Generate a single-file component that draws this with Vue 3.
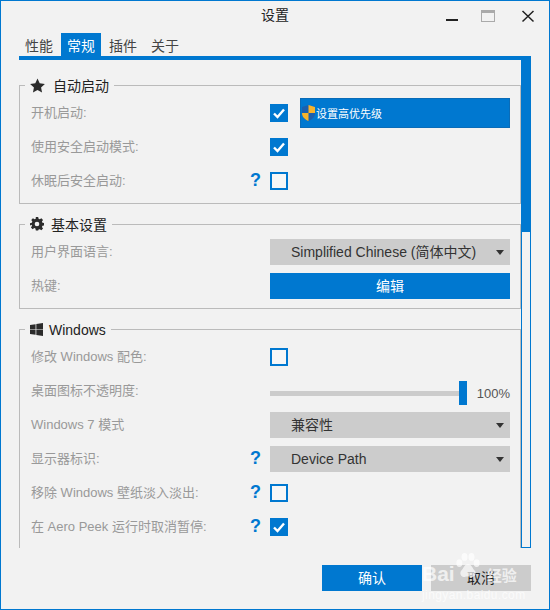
<script setup>
const autoRows = [
  { label: '开机启动:', checked: true, priority: true },
  { label: '使用安全启动模式:', checked: true },
  { label: '休眠后安全启动:', help: true, checked: false },
]
const winRows = [
  { label: '修改 Windows 配色:', type: 'check', checked: false },
  { label: '桌面图标不透明度:', type: 'slider' },
  { label: 'Windows 7 模式', type: 'combo', value: '兼容性' },
  { label: '显示器标识:', type: 'combo', help: true, value: 'Device Path' },
  { label: '移除 Windows 壁纸淡入淡出:', type: 'check', help: true, checked: false },
  { label: '在 Aero Peek 运行时取消暂停:', type: 'check', help: true, checked: true },
]
const tabs = ['性能', '常规', '插件', '关于']
</script>

<template>
  <div class="win">
    <div class="titlebar">
      <span class="title">设置</span>
      <div class="winbtns">
        <svg width="16" height="16" viewBox="0 0 16 16"><rect x="2" y="11" width="12" height="2" fill="#222" /></svg>
        <svg width="16" height="16" viewBox="0 0 16 16"><rect x="1.5" y="2.500" width="13" height="11" fill="none" stroke="#aaa" /><rect x="1" y="2" width="14" height="3" fill="#aaa" /></svg>
        <svg class="close" width="16" height="16" viewBox="0 0 16 16"><path d="M2.500 3 13.500 13.500M13.500 3 2.500 13.500" stroke="#222" stroke-width="1.500" fill="none" /></svg>
      </div>
    </div>

    <div class="tabs">
      <div v-for="t in tabs" :key="t" class="tab" :class="{ active: t === '常规' }">{{ t }}</div>
    </div>

    <div class="panel">
      <div class="scroll">
        <fieldset class="group">
          <legend>
            <svg width="15" height="15" viewBox="0 0 24 24"><path d="M12 .8l3.500 7.600 8.300 1-6.100 5.700 1.600 8.200L12 19.200l-7.300 4.100 1.600-8.200L.2 9.400l8.300-1z" fill="#2b2b2b" /></svg>
            <span>自动启动</span>
          </legend>
          <div v-for="r in autoRows" :key="r.label" class="row">
            <span class="label">{{ r.label }}</span>
            <span class="help">{{ r.help ? '?' : '' }}</span>
            <div class="ctl">
              <span class="check" :class="{ on: r.checked }">
                <svg v-if="r.checked" width="14" height="14" viewBox="0 0 14 14"><path d="M2 7.500 5.500 11 12 3.500" fill="none" stroke="#fff" stroke-width="2.400" /></svg>
              </span>
              <div v-if="r.priority" class="priority">
                <svg width="13" height="16" viewBox="0 0 13 16">
                  <path d="M6.500 0 13 2v6c0 4-3 6.500-6.500 8C3 14.500 0 12 0 8V2z" fill="#1b5fae" />
                  <path d="M6.500 0 13 2v6H6.500zM6.500 8v8C3 14.500 0 12 0 8z" fill="#f7b32b" />
                </svg>
                <span>设置高优先级</span>
              </div>
            </div>
          </div>
        </fieldset>

        <fieldset class="group">
          <legend class="tight">
            <svg width="14" height="14" viewBox="0 0 24 24"><path fill="#2b2b2b" fill-rule="evenodd" d="M10 1h4l.7 3.200 2 .8 2.800-1.800 2.800 2.800L20.500 8.800l.8 2 3.200.7v4l-3.200.5-.8 2 1.800 2.800-2.800 2.800-2.800-1.800-2 .8L14 24h-4l-.7-3.200-2-.8-2.800 1.800-2.800-2.800 1.800-2.800-.8-2L0 15.500v-4l3.200-.7.8-2L2.200 6 5 3.200 7.800 5l2-.8zM12 9a4 4 0 1 0 0 8 4 4 0 0 0 0-8z" transform="translate(0 -1)" /></svg>
            <span>基本设置</span>
          </legend>
          <div class="row">
            <span class="label">用户界面语言:</span>
            <span class="help"></span>
            <div class="ctl"><div class="combo">Simplified Chinese (简体中文)</div></div>
          </div>
          <div class="row">
            <span class="label">热键:</span>
            <span class="help"></span>
            <div class="ctl"><div class="btn wide">编辑</div></div>
          </div>
        </fieldset>

        <fieldset class="group">
          <legend class="win-legend">
            <svg width="13" height="13" viewBox="0 0 14 14"><path fill="#2b2b2b" d="M0 2.200 6 1.300V6.600H0zM6.800 1.200 14 0V6.600H6.800zM0 7.400H6V12.700L0 11.800zM6.800 7.400H14V14L6.800 12.800z" /></svg>
            <span>Windows</span>
          </legend>
          <div v-for="r in winRows" :key="r.label" class="row">
            <span class="label">{{ r.label }}</span>
            <span class="help">{{ r.help ? '?' : '' }}</span>
            <div class="ctl">
              <span v-if="r.type === 'check'" class="check" :class="{ on: r.checked }">
                <svg v-if="r.checked" width="14" height="14" viewBox="0 0 14 14"><path d="M2 7.500 5.500 11 12 3.500" fill="none" stroke="#fff" stroke-width="2.400" /></svg>
              </span>
              <div v-else-if="r.type === 'combo'" class="combo">{{ r.value }}</div>
              <div v-else class="slider">
                <div class="track"></div>
                <div class="thumb"></div>
                <span class="pct">100%</span>
              </div>
            </div>
          </div>
        </fieldset>
      </div>
      <div class="scrollbar"><div class="sthumb"></div></div>
    </div>

    <div class="actions">
      <div class="btn action">确认</div>
      <div class="btn action cancel">取消</div>
    </div>

    <div class="watermark">
      <div class="wm-top">
        <span class="wm-bai">Bai</span>
        <svg width="26" height="29" viewBox="0 0 30 32" fill="#fff">
          <ellipse cx="5" cy="12" rx="3.500" ry="4.500" />
          <ellipse cx="11" cy="5" rx="3.500" ry="4.500" />
          <ellipse cx="19" cy="5" rx="3.500" ry="4.500" />
          <ellipse cx="25" cy="12" rx="3.500" ry="4.500" />
          <path d="M15 13c4 0 5 5 8 8 2 3 0 8-4 7-2-.5-6-.5-8 0-4 1-6-4-4-7 3-3 4-8 8-8z" />
        </svg>
        <span class="wm-cn">经验</span>
      </div>
      <div class="wm-url">jingyan.baidu.com</div>
    </div>
  </div>
</template>

<style>
html, body { margin: 0; padding: 0; }
</style>

<style scoped>
.win {
  position: relative;
  box-sizing: border-box;
  width: 550px; height: 610px;
  background: #f2f2f2;
  border: 1px solid #0078d0;
  font-family: "Liberation Sans", "Noto Sans CJK SC", sans-serif;
  font-size: 14px;
  color: #333;
  overflow: hidden;
}

.titlebar { height: 32px; display: flex; align-items: center; justify-content: center; position: relative; }
.title { font-size: 14px; color: #222; margin-top: -6px; }
.winbtns { position: absolute; top: 7px; right: 13px; display: flex; gap: 20px; }
.close { margin-left: 4px; }

.tabs { display: flex; gap: 2px; height: 23px; padding-left: 18px; }
.tab { width: 40px; box-sizing: border-box; padding: 0 6px; line-height: 26px; color: #444; }
.tab.active { background: #0078d0; color: #fff; }

.panel {
  display: flex;
  margin-left: 18px;
  width: 512px; height: 492px;
  box-sizing: border-box;
  border-top: 4px solid #0078d0;
}
.scroll { width: 502px; height: 488px; overflow: hidden; padding-top: 15px; box-sizing: border-box; flex: none; }
.scrollbar { width: 10px; height: 488px; box-sizing: border-box; border: 1px solid #0078d0; flex: none; }
.sthumb { height: 171px; margin: 0 -1px; background: #0078d0; }

.group {
  margin: 0 0 10px;
  padding: 1px 10px 5px 11px;
  border: 1px solid #bbb;
  min-width: 0;
}
legend {
  display: flex; align-items: center; gap: 8px;
  height: 20px;
  margin-left: -6px;
  padding: 0 5px;
  color: #222;
}
legend.tight { gap: 7px; }
legend.win-legend { gap: 6px; }
legend.win-legend span { padding-top: 2px; }

.row { display: grid; grid-template-columns: 1fr 20px 240px; align-items: center; height: 34px; }
.label { font-size: 13px; color: #999; white-space: nowrap; padding-bottom: 4px; }
.help { font-weight: bold; font-size: 18px; color: #0078d0; padding-bottom: 2px; }
.ctl { display: flex; align-items: center; gap: 12px; }

.check {
  box-sizing: border-box;
  width: 18px; height: 18px;
  border: 2px solid #0078d0;
  background: #f7f7f7;
  display: flex; align-items: center; justify-content: center;
  flex: none;
}
.check.on { background: #0078d0; }

.priority {
  flex: 1; height: 30px;
  box-sizing: border-box;
  border: 1px solid #0a6cb8;
  background: #0078d0;
  color: #fff;
  font-size: 11px;
  display: flex; align-items: center; gap: 1px;
  padding-left: 1px;
}

.combo {
  position: relative;
  box-sizing: border-box;
  width: 240px; height: 26px;
  background: #ccc;
  color: #333;
  line-height: 26px;
  padding-left: 21px;
}
.combo::after {
  content: '';
  position: absolute;
  right: 6px; top: 11px;
  border: 4px solid transparent;
  border-top: 5px solid #333;
  border-bottom: 0;
}

.btn { background: #0078d0; color: #fff; text-align: center; height: 26px; line-height: 26px; }
.btn.wide { width: 240px; }

.slider { display: flex; align-items: center; width: 240px; height: 24px; margin-top: 4px; }
.track { flex: none; width: 189px; height: 5px; background: #ccc; }
.thumb { flex: none; width: 8px; height: 24px; background: #0078d0; }
.pct { flex: 1; text-align: right; font-size: 13px; color: #555; }

.actions { display: flex; justify-content: flex-end; gap: 9px; padding: 17px 18px 0 0; }
.action { width: 100px; }
.cancel { background: #ccc; color: #222; }

.watermark {
  position: absolute;
  left: 421px; top: 551px;
  width: 110px;
  opacity: .7;
  color: #fff;
  pointer-events: none;
}
.wm-top { display: flex; align-items: flex-end; height: 31px; }
.wm-bai { font-size: 21px; font-weight: bold; line-height: 26px; margin-bottom: -4px; }
.wm-top svg { margin-bottom: 2px; }
.wm-cn { font-size: 15px; font-weight: bold; line-height: 20px; margin-left: 6px; margin-bottom: -3px; }
.wm-url { font-size: 12px; line-height: 14px; margin-top: 5px; letter-spacing: .4px; }
</style>
